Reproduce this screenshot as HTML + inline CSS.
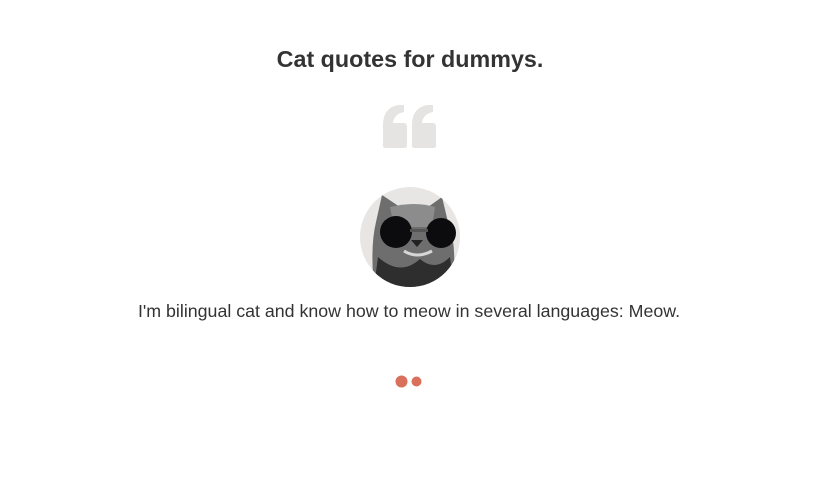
<!DOCTYPE html>
<html><head><meta charset="utf-8"><style>
html,body{margin:0;padding:0;background:#fff;width:836px;height:493px;overflow:hidden;font-family:"Liberation Sans",Arial,sans-serif;}
h1{position:absolute;left:0;width:820px;top:45px;margin:0;text-align:center;font-size:23.3px;font-weight:bold;color:#333;line-height:28px;}
.q{position:absolute;left:0;width:818px;top:300px;text-align:center;font-size:17.8px;color:#333;line-height:22px;}
svg{position:absolute;}
</style></head><body>
<h1>Cat quotes for dummys.</h1>
<svg style="left:0;top:0" width="836" height="160">
 <g fill="#e6e4e2">
  <path d="M383 146 L383 125 Q383 108 398 105 L404 105 L404 112 Q394 114 393 123 L404 123 Q407 123 407 127 L407 146 Q407 148 404 148 L386 148 Q383 148 383 146 Z"/>
  <path d="M412 146 L412 125 Q412 108 427 105 L433 105 L433 112 Q423 114 422 123 L433 123 Q436 123 436 127 L436 146 Q436 148 433 148 L415 148 Q412 148 412 146 Z"/>
 </g>
</svg>
<svg style="left:360px;top:187px" width="100" height="100" viewBox="0 0 100 100">
 <defs><clipPath id="c"><circle cx="50" cy="50" r="50"/></clipPath></defs>
 <circle cx="50" cy="50" r="50" fill="#e8e6e4"/>
 <g clip-path="url(#c)">
  <path d="M14 100 Q10 60 16 35 L22 8 L40 20 Q55 16 68 20 L82 10 L88 35 Q98 60 92 100 Z" fill="#6e6e6e"/>
  <path d="M30 20 Q55 14 75 20 L72 40 L34 40 Z" fill="#8c8c8c"/>
  <path d="M18 70 Q40 90 60 72 Q75 85 90 70 L94 100 L14 100 Z" fill="#2e2e2e"/>
  <circle cx="36" cy="45" r="16" fill="#0c0c0e"/>
  <circle cx="81" cy="46" r="15" fill="#0c0c0e"/>
  <rect x="50" y="42" width="18" height="3" fill="#555"/>
  <path d="M51 53 L63 53 L57 60 Z" fill="#222"/>
  <path d="M44 64 Q57 72 72 64" stroke="#d6d6d6" stroke-width="3" fill="none"/>
 </g>
</svg>
<div class="q">I'm bilingual cat and know how to meow in several languages: Meow.</div>
<svg style="left:390px;top:370px" width="40" height="24">
 <circle cx="11.5" cy="11.5" r="6" fill="#d9705c"/>
 <circle cx="26.5" cy="11.5" r="5" fill="#d9705c"/>
</svg>
</body></html>
